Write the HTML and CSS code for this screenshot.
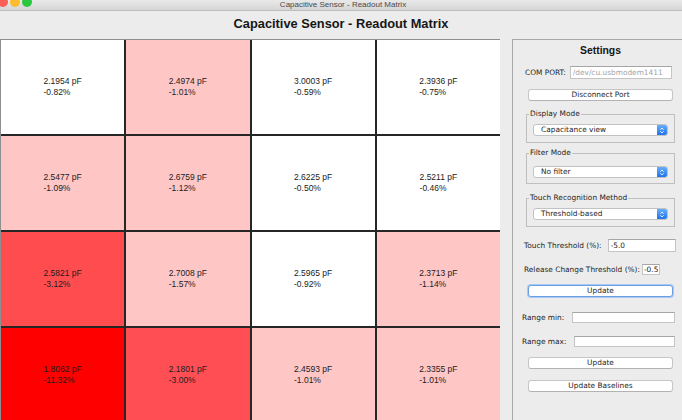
FILE: index.html
```html
<!DOCTYPE html>
<html>
<head>
<meta charset="utf-8">
<title>Capacitive Sensor - Readout Matrix</title>
<link rel="stylesheet" href="styles.css">
</head>
<body>
<div class="window">
  <div class="titlebar">
    <div class="lights"><span class="light red"></span><span class="light yellow"></span><span class="light green"></span></div>
    <div class="wintitle">Capacitive Sensor - Readout Matrix</div>
    <div></div>
  </div>
  <div class="header"><h1 class="title">Capacitive Sensor - Readout Matrix</h1></div>
  <div class="main">
    <div class="matrix">
      <div class="cell white"><div class="val">2.1954 pF<br>-0.82%</div></div>
      <div class="cell pink"><div class="val">2.4974 pF<br>-1.01%</div></div>
      <div class="cell white"><div class="val">3.0003 pF<br>-0.59%</div></div>
      <div class="cell white"><div class="val">2.3936 pF<br>-0.75%</div></div>

      <div class="cell pink"><div class="val">2.5477 pF<br>-1.09%</div></div>
      <div class="cell pink"><div class="val">2.6759 pF<br>-1.12%</div></div>
      <div class="cell white"><div class="val">2.6225 pF<br>-0.50%</div></div>
      <div class="cell white"><div class="val">2.5211 pF<br>-0.46%</div></div>

      <div class="cell mid"><div class="val">2.5821 pF<br>-3.12%</div></div>
      <div class="cell pink"><div class="val">2.7008 pF<br>-1.57%</div></div>
      <div class="cell white"><div class="val">2.5965 pF<br>-0.92%</div></div>
      <div class="cell pink"><div class="val">2.3713 pF<br>-1.14%</div></div>

      <div class="cell red"><div class="val">1.8062 pF<br>-11.32%</div></div>
      <div class="cell mid2"><div class="val">2.1801 pF<br>-3.00%</div></div>
      <div class="cell pink"><div class="val">2.4593 pF<br>-1.01%</div></div>
      <div class="cell pink"><div class="val">2.3355 pF<br>-1.01%</div></div>
    </div>

    <div class="panel">
      <div class="panel-title">Settings</div>

      <div class="row row-com">
        <span class="lbl">COM PORT:</span>
        <input class="field field-com" type="text" value="/dev/cu.usbmodem1411" readonly>
      </div>

      <button class="btn btn-disconnect" type="button">Disconnect Port</button>

      <fieldset class="group group-display">
        <legend>Display Mode</legend>
        <div class="combo"><span class="combo-text">Capacitance view</span><span class="combo-arrow"><svg width="6" height="9" viewBox="0 0 6 9"><path d="M1.5 3.6 L3 2.1 L4.5 3.6 M1.5 5.4 L3 6.9 L4.5 5.4" fill="none" stroke="#fff" stroke-width="1"/></svg></span></div>
      </fieldset>

      <fieldset class="group group-filter">
        <legend>Filter Mode</legend>
        <div class="combo"><span class="combo-text">No filter</span><span class="combo-arrow"><svg width="6" height="9" viewBox="0 0 6 9"><path d="M1.5 3.6 L3 2.1 L4.5 3.6 M1.5 5.4 L3 6.9 L4.5 5.4" fill="none" stroke="#fff" stroke-width="1"/></svg></span></div>
      </fieldset>

      <fieldset class="group group-touch">
        <legend>Touch Recognition Method</legend>
        <div class="combo"><span class="combo-text">Threshold-based</span><span class="combo-arrow"><svg width="6" height="9" viewBox="0 0 6 9"><path d="M1.5 3.6 L3 2.1 L4.5 3.6 M1.5 5.4 L3 6.9 L4.5 5.4" fill="none" stroke="#fff" stroke-width="1"/></svg></span></div>
      </fieldset>

      <div class="row row-touch">
        <span class="lbl">Touch Threshold (%):</span>
        <input class="field field-touch" type="text" value="-5.0" readonly>
      </div>

      <div class="row row-release">
        <span class="lbl">Release Change Threshold (%):</span>
        <input class="field field-release" type="text" value="-0.5" readonly>
      </div>

      <button class="btn btn-focus btn-update1" type="button">Update</button>

      <div class="row row-min">
        <span class="lbl">Range min:</span>
        <input class="field field-min" type="text" value="" readonly>
      </div>

      <div class="row row-max">
        <span class="lbl">Range max:</span>
        <input class="field field-max" type="text" value="" readonly>
      </div>

      <button class="btn btn-update2" type="button">Update</button>
      <button class="btn btn-baselines" type="button">Update Baselines</button>
    </div>
  </div>
</div>
</body>
</html>
```
FILE: styles.css
```css
* { box-sizing: border-box; }

html, body {
  margin: 0;
  padding: 0;
}

body {
  width: 682px;
  height: 420px;
  overflow: hidden;
  background: #ececec;
  font-family: "Liberation Sans", Arial, sans-serif;
}

.window {
  display: flex;
  flex-direction: column;
  width: 682px;
  height: 420px;
}

.titlebar {
  flex: none;
  height: 11px;
  display: grid;
  grid-template-columns: 1fr auto 1fr;
  align-items: start;
  background: linear-gradient(#e9e9e9, #d5d5d5);
  border-bottom: 1px solid #bcbcbc;
  overflow: hidden;
}

.lights {
  display: flex;
  gap: 2px;
  margin-left: -2px;
  margin-top: -3px;
}

.light {
  width: 10px;
  height: 10px;
  border-radius: 50%;
}
.light.red { background: #fc5f57; }
.light.yellow { background: #fdbb2e; }
.light.green { background: #29c83f; }

.wintitle {
  font-size: 8px;
  line-height: 10px;
  color: #4a4a4a;
  padding-left: 4px;
}

.header {
  flex: none;
  height: 28px;
  display: flex;
  justify-content: center;
  padding-top: 5px;
}

.title {
  margin: 0;
  font-size: 12.8px;
  line-height: 15px;
  font-weight: bold;
  color: #161616;
}

.main {
  flex: 1;
  display: flex;
  gap: 12px;
  min-height: 0;
}

.matrix {
  flex: none;
  width: 500px;
  height: 383px;
  display: grid;
  grid-template-columns: repeat(4, 1fr);
  grid-template-rows: repeat(4, 94px);
  gap: 2px;
  background: #262626;
  border-left: 1px solid #8e8e8e;
  border-top: 1px solid #8e8e8e;
}

.cell {
  display: flex;
  align-items: center;
  justify-content: center;
}
.cell.white { background: #ffffff; }
.cell.pink { background: #ffc6c6; }
.cell.mid { background: #ff4d4f; }
.cell.mid2 { background: #ff4f55; }
.cell.red { background: #ff0000; }

.val {
  text-align: left;
  font-size: 8.5px;
  line-height: 11px;
  color: #1c1c1c;
}

.panel {
  flex: none;
  width: 176px;
  border-left: 1px solid #a8a8a8;
  border-top: 1px solid #a8a8a8;
  display: flex;
  flex-direction: column;
  padding: 0 13px;
  font-family: "DejaVu Sans", "Liberation Sans", sans-serif;
  font-size: 7.4px;
  color: #1e1e1e;
}

.panel-title {
  margin-top: 5px;
  text-align: center;
  font-family: "Liberation Sans", Arial, sans-serif;
  font-weight: bold;
  font-size: 10.4px;
  line-height: 12px;
  color: #161616;
}

.row {
  display: flex;
  align-items: center;
  gap: 5px;
}
.row-com { margin-top: 9px; height: 13px; gap: 4px; margin-left: -1px; }
.row-touch { margin-top: 12px; height: 13px; gap: 6px; margin-left: -2px; }
.row-release { margin-top: 12px; height: 11px; margin-left: -2px; gap: 2px; }
.row-min { margin-top: 15px; height: 11px; margin-left: -4px; gap: 8px; }
.row-max { margin-top: 13px; height: 11px; margin-left: -4px; gap: 8px; }

.lbl {
  white-space: nowrap;
  line-height: 10px;
}

.field {
  display: block;
  margin: 0;
  padding: 0 2px;
  background: #fff;
  border: 1px solid #c4c4c4;
  border-top-color: #a6a6a6;
  border-radius: 0;
  font-family: "DejaVu Sans", "Liberation Sans", sans-serif;
  font-size: 7.4px;
  color: #1e1e1e;
  outline: none;
}
.field-com { width: 102px; height: 13px; color: #a3a3a3; }
.field-touch { width: 68px; height: 13px; }
.field-release { width: 18px; height: 11px; padding: 0 1px; }
.field-min { width: 103px; height: 11px; }
.field-max { width: 101px; height: 11px; }

.btn {
  display: block;
  margin: 0 2px;
  height: 12px;
  padding: 0;
  background: #ffffff;
  border: 1px solid #c6c6c6;
  border-bottom-color: #b2b2b2;
  border-radius: 3px;
  font-family: "DejaVu Sans", "Liberation Sans", sans-serif;
  font-size: 7.4px;
  line-height: 10px;
  color: #1e1e1e;
  text-align: center;
}
.btn-focus {
  border-color: #6b9fe6;
  box-shadow: 0 0 0 1px #a9c9f3;
}
.btn-disconnect { margin-top: 10px; }
.btn-update1 { margin-top: 10px; }
.btn-update2 { margin-top: 10px; }
.btn-baselines { margin-top: 11px; }

.group {
  margin: 0;
  padding: 5px 6px 6px;
  border: 1px solid #bfbfbf;
  min-width: 0;
}
.group legend {
  margin-left: -4px;
  padding: 0 1px;
  font-size: 7.4px;
  line-height: 10px;
  color: #1e1e1e;
}
.group-display { margin-top: 8px; }
.group-filter { margin-top: 5px; padding-top: 8px; padding-bottom: 5px; }
.group-touch { margin-top: 9px; }

.combo {
  display: flex;
  align-items: stretch;
  height: 12px;
  background: #fff;
  border: 1px solid #c2c2c2;
  border-radius: 3px;
  overflow: hidden;
}
.combo-text {
  flex: 1;
  padding-left: 7px;
  line-height: 10px;
  font-size: 7.4px;
  color: #1e1e1e;
}
.combo-arrow {
  flex: none;
  width: 10px;
  display: flex;
  align-items: center;
  justify-content: center;
  background: linear-gradient(#67aefa, #1f74ee);
}
```
